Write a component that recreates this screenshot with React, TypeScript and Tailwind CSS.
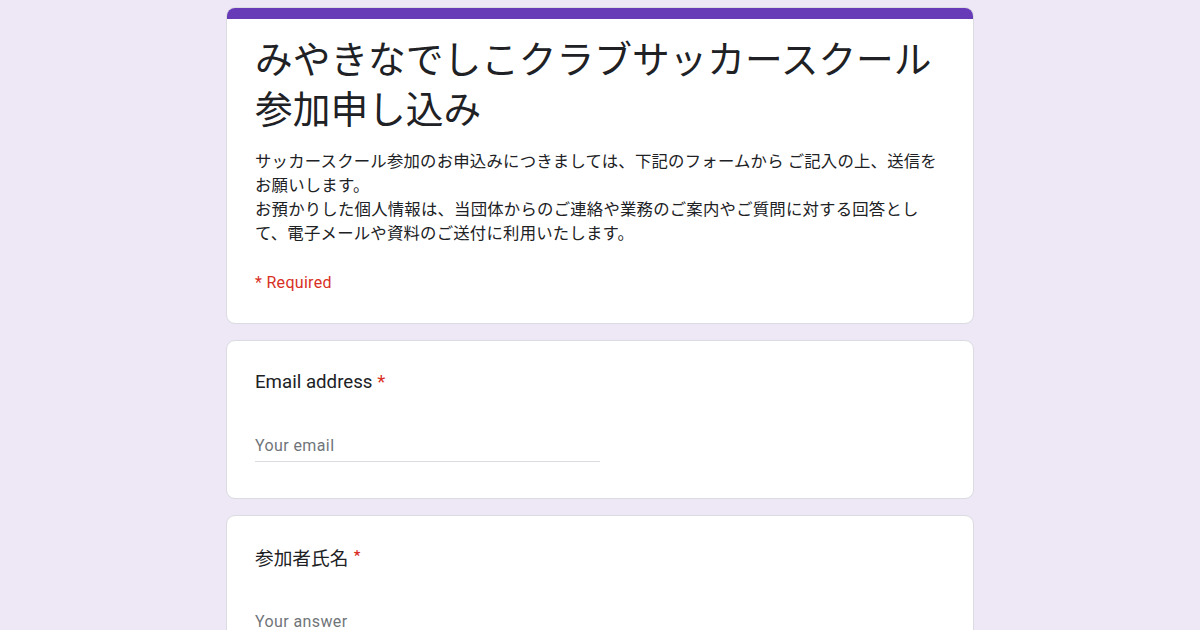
import React from "react";

const jp = "font-['Noto_Sans_CJK_JP','Noto_Sans',sans-serif]";
const rb = "font-['Roboto','Noto_Sans_CJK_JP',sans-serif]";

export default function App() {
  return (
    <div className="min-h-screen bg-[#ede7f6] pt-[7px]">
      <div className="mx-auto flex w-[748px] flex-col gap-[16px]">
        <div className="overflow-hidden rounded-[9px] border border-[#dadce0] bg-white">
          <div className="h-[11px] bg-[#673ab7]" />
          <div className="px-[28px] pb-[28px] pt-[13px]">
            <h1 className={`${jp} text-[37.7px] leading-[50px] text-[#202124]`}>
              みやきなでしこクラブサッカースクール
              <br />
              参加申し込み
            </h1>
            <p className={`${jp} mt-[16px] text-[16.4px] leading-[24px] tracking-[0.2px] text-[#202124]`}>
              サッカースクール参加のお申込みにつきましては、下記のフォームから ご記入の上、送信を
              <br />
              お願いします。
              <br />
              お預かりした個人情報は、当団体からのご連絡や業務のご案内やご質問に対する回答とし
              <br />
              て、電子メールや資料のご送付に利用いたします。
            </p>
            <div className={`${rb} mt-[27px] text-[16px] leading-[24px] tracking-[0.3px] text-[#d93025]`}>* Required</div>
          </div>
        </div>

        <div className="rounded-[9px] border border-[#dadce0] bg-white px-[28px] pb-[36px] pt-[27px]">
          <div className={`${rb} text-[18.7px] leading-[28px] text-[#202124]`}>
            Email address <span className="text-[#d93025]">*</span>
          </div>
          <div className="mt-[38px] w-[345px] border-b border-[#dadce0] pb-[3px]">
            <div className={`${rb} text-[16px] leading-[24px] tracking-[0.4px] text-[#70757a]`}>Your email</div>
          </div>
        </div>

        <div className="rounded-[9px] border border-[#dadce0] bg-white px-[28px] pb-[36px] pt-[27px]">
          <div className={`${jp} text-[18.7px] leading-[28px] text-[#202124]`}>
            参加者氏名 <span className="text-[#d93025]">*</span>
          </div>
          <div className="mt-[39px] w-[345px] border-b border-[#dadce0] pb-[3px]">
            <div className={`${rb} text-[16px] leading-[24px] tracking-[0.4px] text-[#70757a]`}>Your answer</div>
          </div>
        </div>
      </div>
    </div>
  );
}
